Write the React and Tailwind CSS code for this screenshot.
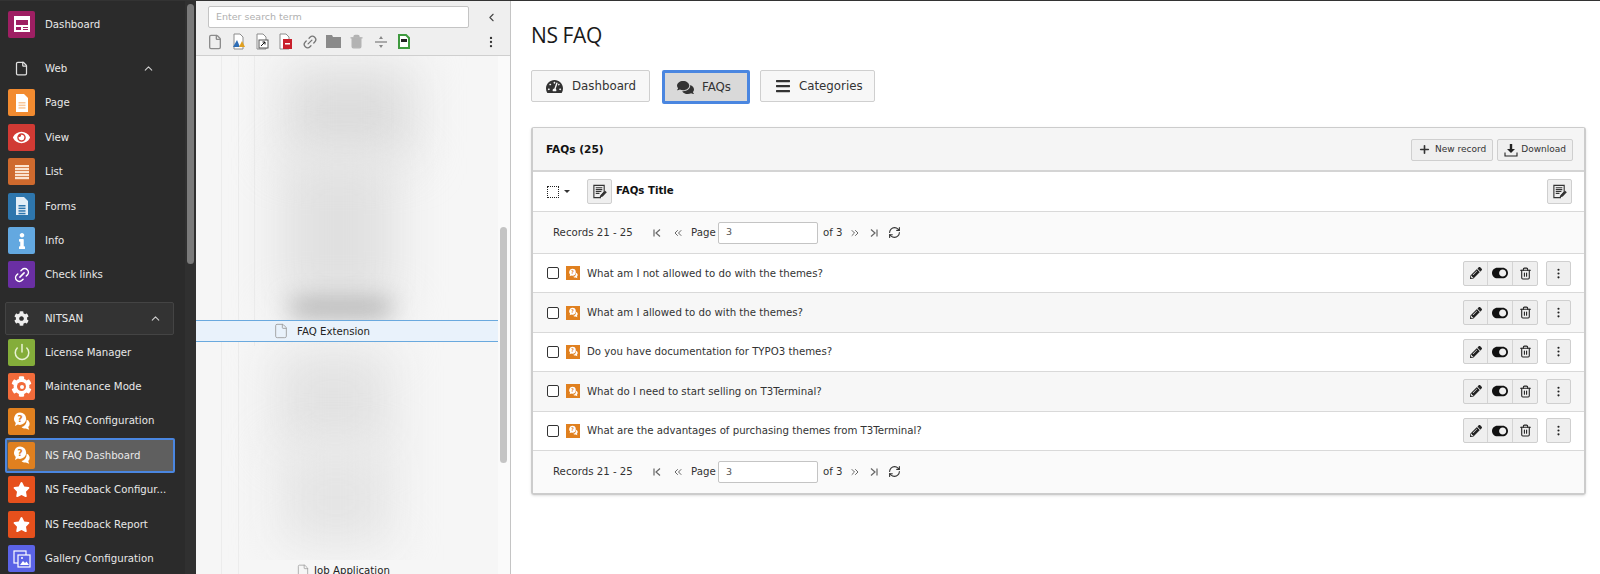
import React from 'react';
import { ChevronUp, ChevronLeft, EllipsisVertical, File, Trash2, Plus, RefreshCw, ChevronsLeft, ChevronsRight, Link2, Power } from 'lucide-react';
import { FaTachometerAlt, FaComments, FaBars, FaPencilAlt, FaToggleOn, FaCog, FaEye, FaStar, FaInfo } from 'react-icons/fa';

const FaqGlyph = ({ size = 20 }) => (
  <svg width={size} height={size} viewBox="0 0 20 20">
    <path d="M8 1.500a6.200 6.200 0 0 1 0 12.400c-.8 0-1.500-.1-2.200-.4L3 15l.8-3A6.200 6.200 0 0 1 8 1.500z" fill="#fff" />
    <path d="M14.600 8.500a4.600 4.600 0 0 1 1.600 7.600l1 2.600-3.400-1.300c-1.600.2-3.200-.3-4.300-1.500 3.200-.2 5.300-3.300 5.100-7.400z" fill="#fff" />
    <text x="8" y="11" fontSize="9" fontWeight="700" textAnchor="middle" fill="#e0801f" fontFamily="DejaVu Sans">?</text>
  </svg>
);

const DocGlyph = ({ lines = 3, color = '#fff', line = '#f9c79a' }) => (
  <svg width="18" height="20" viewBox="0 0 18 20">
    <path d="M3 1h8l4 4v14H3z" fill={color} />
    {Array.from({ length: lines }).map((_, i) => (
      <rect key={i} x="5.500" y={9 + i * 2.6} width="7" height="1.500" fill={line} />
    ))}
  </svg>
);

const DashGlyph = () => (
  <svg width="18" height="18" viewBox="0 0 18 18">
    <rect x="1" y="1" width="16" height="16" fill="#fff" />
    <rect x="3" y="5" width="12" height="5" fill="#9e1f63" />
    <rect x="3" y="12" width="5" height="3" fill="#9e1f63" />
    <rect x="10" y="12" width="5" height="1" fill="#9e1f63" />
    <rect x="10" y="14" width="5" height="1" fill="#9e1f63" />
  </svg>
);

const ListGlyph = () => (
  <svg width="16" height="16" viewBox="0 0 16 16">
    {[1, 4, 7, 10, 13].map((y) => <rect key={y} x="1" y={y} width="14" height="2.200" fill="#fbe3d0" />)}
  </svg>
);

const GalleryGlyph = () => (
  <svg width="18" height="18" viewBox="0 0 18 18" fill="none" stroke="#fff" strokeWidth="1.200">
    <rect x="1" y="1" width="12" height="12" />
    <rect x="5" y="5" width="12" height="12" fill="#5b63e6" />
    <path d="M7 15l3-4 2 2 1.500-1.500L16 15z" fill="#fff" stroke="none" />
    <circle cx="9" cy="8" r="1" fill="#fff" stroke="none" />
  </svg>
);

const MaintenanceGlyph = () => (
  <span className="relative flex items-center justify-center">
    <FaCog size={21} color="#fff" />
    <span className="absolute w-[9px] h-[9px] rounded-full bg-[#f26b3a] flex items-center justify-center">
      <span className="w-[4px] h-[4px] rounded-full bg-white" />
    </span>
  </span>
);

const DownloadIcon = () => (
  <svg width="14" height="14" viewBox="0 0 14 14" className="mr-[3px]">
    <path d="M5.800 1h2.400v5H11L7 10 3 6h2.800z" fill="#222" />
    <path d="M1 9.500v3.500h12V9.500" fill="none" stroke="#222" strokeWidth="1.100" />
  </svg>
);

const webModules = [
  { label: 'Page', bg: 'bg-[#f28b30]', icon: <DocGlyph /> },
  { label: 'View', bg: 'bg-[#d13a34]', icon: <FaEye size={17} color="#fff" /> },
  { label: 'List', bg: 'bg-[#cf6a2e]', icon: <ListGlyph /> },
  { label: 'Forms', bg: 'bg-[#2e76ad]', icon: <DocGlyph lines={4} color="#e3eef7" line="#2e76ad" /> },
  { label: 'Info', bg: 'bg-[#63a8e0]', icon: <FaInfo size={16} color="#fff" /> },
  { label: 'Check links', bg: 'bg-[#6a2fa3]', icon: <Link2 size={18} color="#fff" className="-rotate-45" /> },
];

const nitsanModules = [
  { label: 'License Manager', bg: 'bg-[#84ad3a]', icon: <Power size={18} color="#e8f2d4" /> },
  { label: 'Maintenance Mode', bg: 'bg-[#f26b3a]', icon: <MaintenanceGlyph /> },
  { label: 'NS FAQ Configuration', bg: 'bg-[#e0801f]', icon: <FaqGlyph /> },
  { label: 'NS FAQ Dashboard', bg: 'bg-[#e0801f]', icon: <FaqGlyph />, active: true },
  { label: 'NS Feedback Configur...', bg: 'bg-[#e6501c]', icon: <FaStar size={17} color="#fff" /> },
  { label: 'NS Feedback Report', bg: 'bg-[#e6501c]', icon: <FaStar size={17} color="#fff" /> },
  { label: 'Gallery Configuration', bg: 'bg-[#5b63e6]', icon: <GalleryGlyph /> },
];

const questions = [
  'What am I not allowed to do with the themes?',
  'What am I allowed to do with the themes?',
  'Do you have documentation for TYPO3 themes?',
  'What do I need to start selling on T3Terminal?',
  'What are the advantages of purchasing themes from T3Terminal?',
];

const ModuleRow = ({ label, bg, icon, active }) => (
  <div className="h-[34.4px] flex items-center relative">
    {active && <div className="absolute left-[5px] w-[170px] top-0 h-[35px] bg-[#5f5f5f] border-2 border-[#4a86e0] rounded-[2px]" />}
    <div className={`relative ml-[8px] w-[27px] h-[27px] rounded-[2px] flex items-center justify-center ${bg}`}>{icon}</div>
    <span className="relative ml-[10px] text-[10.2px] text-[#e8e8e8]">{label}</span>
  </div>
);

const EditIcon = () => (
  <svg width="15" height="15" viewBox="0 0 16 16">
    <path d="M2 1.500h11v7l-4 4.500v1.500H2z" fill="none" stroke="#333" strokeWidth="1.200" />
    <path d="M4 4h7M4 6h7M4 8h6M4 10h4" stroke="#333" strokeWidth="1.100" />
    <path d="M9 14l.7-2.600 4.300-4.300 1.800 1.800-4.300 4.300z" fill="#333" />
  </svg>
);

const SquareBtn = ({ children }) => (
  <div className="w-[25px] h-[25px] bg-[#efefef] border border-[#cfcfcf] rounded-[2px] flex items-center justify-center">{children}</div>
);

const FirstIcon = () => (
  <svg width="12" height="12" viewBox="0 0 12 12" fill="none" stroke="#666" strokeWidth="1.200">
    <path d="M3 2.500v7M9 2.500L5 6l4 3.500" />
  </svg>
);

const LastIcon = () => (
  <svg width="12" height="12" viewBox="0 0 12 12" fill="none" stroke="#666" strokeWidth="1.200">
    <path d="M9 2.500v7M3 2.500L7 6l-4 3.500" />
  </svg>
);

const Pager = () => (
  <div className="flex items-center pl-[20px] text-[10.2px] text-[#333]">
    <span className="w-[98px]">Records 21 - 25</span>
    <FirstIcon />
    <ChevronsLeft size={12} className="text-[#666] ml-[9px] mr-[7px]" />
    <span className="w-[24px]">Page</span>
    <div className="ml-[3px] w-[100px] h-[22px] bg-white border border-[#c4c4c4] rounded-[2px] flex items-center pl-[7px] text-[9.5px] text-[#555]">3</div>
    <span className="ml-[5px] w-[22px]">of 3</span>
    <ChevronsRight size={12} className="text-[#666] ml-[4px] mr-[7px]" />
    <LastIcon />
    <RefreshCw size={13} className="text-[#333] ml-[8px]" />
  </div>
);

const tools = [
  <File size={16} className="text-[#8c8c8c]" />,
  <svg width="16" height="17" viewBox="0 0 16 17"><path d="M3 1h6l3 3v12H3z" fill="#fff" stroke="#8c8c8c" /><path d="M2 14l4-7 3 7z" fill="#2f6db5" /><path d="M8 14l3-6 3 6z" fill="#e0a020" /></svg>,
  <svg width="16" height="17" viewBox="0 0 16 17"><path d="M3 1h6l3 3v12H3z" fill="#fff" stroke="#8c8c8c" /><rect x="5" y="7" width="9" height="8" fill="#fff" stroke="#555" /><path d="M7 13l4-4M8.500 9H11v2.500" stroke="#111" fill="none" /></svg>,
  <svg width="16" height="17" viewBox="0 0 16 17"><path d="M2 1h6l3 3v12H2z" fill="#fff" stroke="#8c8c8c" /><rect x="5" y="6" width="9" height="10" fill="#c8202c" /><rect x="7" y="10" width="5" height="1.500" fill="#fff" /></svg>,
  <Link2 size={16} className="text-[#777] -rotate-45" />,
  <svg width="15" height="13" viewBox="0 0 15 13"><path d="M0 0h6l1 2h8v11H0z" fill="#8a8a8a" /></svg>,
  <Trash2 size={15} className="text-[#b3b3b3]" fill="#b3b3b3" />,
  <svg width="14" height="14" viewBox="0 0 14 14"><rect x="1" y="6.500" width="12" height="1" fill="#666" /><path d="M7 1l2 3H5zM7 13l2-3H5z" fill="#888" /></svg>,
  <svg width="12" height="15" viewBox="0 0 12 15"><path d="M1 1h7l3 3v10H1z" fill="#fff" stroke="#3f9a3f" strokeWidth="2" /><rect x="3" y="5" width="6" height="3" fill="#222" /></svg>,
];

const App = () => (
  <div className="flex w-[1600px] h-[574px] overflow-hidden bg-white font-['DejaVu_Sans',sans-serif] border-t border-[#333]">
    {/* Module menu */}
    <div className="w-[196px] shrink-0 flex bg-[#2b2b2b]">
      <div className="w-[185px] pt-[6px]">
        <ModuleRow label="Dashboard" bg="bg-[#9e1f63]" icon={<DashGlyph />} />
        <div className="mt-[10px] h-[34.4px] flex items-center pr-[30px]">
          <div className="ml-[8px] w-[27px] flex justify-center"><File size={15} color="#e0e0e0" /></div>
          <span className="ml-[10px] text-[10.2px] text-[#e8e8e8] flex-1">Web</span>
          <ChevronUp size={13} color="#cfcfcf" />
        </div>
        {webModules.map((m) => <ModuleRow key={m.label} {...m} />)}
        <div className="mt-[10px] ml-[5px] w-[169px] h-[33px] flex items-center bg-[#333] border border-[#444] rounded-[2px] pr-[11px]">
          <div className="ml-[2px] w-[27px] flex justify-center"><FaCog size={15} color="#eee" /></div>
          <span className="ml-[10px] text-[10.2px] text-[#e8e8e8] flex-1">NITSAN</span>
          <ChevronUp size={13} color="#cfcfcf" />
        </div>
        {nitsanModules.map((m) => <ModuleRow key={m.label} {...m} />)}
      </div>
      <div className="flex-1 bg-[#303030] pt-[3px] pl-[2px]">
        <div className="w-[7px] h-[260px] bg-[#7a7a7a] rounded-full" />
      </div>
    </div>

    {/* Page tree */}
    <div className="w-[315px] shrink-0 flex flex-col bg-[#f6f6f6] border-r border-[#c4c4c4]">
      <div className="h-[55px] shrink-0 bg-[#efefef] border-b border-[#cfcfcf]">
        <div className="flex items-center pt-[5px] pl-[12px]">
          <div className="w-[261px] h-[22px] bg-white border border-[#c4c4c4] rounded-[2px] flex items-center pl-[7px] text-[9.5px] text-[#b0b0b0]">Enter search term</div>
          <ChevronLeft size={13} className="ml-[16px] text-[#444]" />
        </div>
        <div className="flex items-center pl-[7px] pt-[5px]">
          {tools.map((t, i) => <div key={i} className="w-[23.7px] flex justify-center">{t}</div>)}
          <EllipsisVertical size={14} className="ml-[68px] text-[#333]" />
        </div>
      </div>
      <div className="flex-1 flex min-h-0">
        <div className="w-[302px] flex flex-col relative">
          <div className="absolute top-0 left-[25px] w-px h-full bg-[#ececec]" />
          <div className="absolute top-0 left-[42px] w-px h-full bg-[#ececec]" />
          <div className="absolute top-0 left-[58px] w-px h-[290px] bg-[#ececec]" />
          <div className="h-[264px] shrink-0 overflow-hidden relative">
            <div className="mt-[12px] ml-[88px] w-[130px] h-[90px] bg-[#dcdcdc] blur-xl" />
            <div className="ml-[85px] w-[115px] h-[150px] bg-[#e0e0e0] blur-xl" />
            <div className="absolute left-[95px] top-[246px] w-[100px] h-[12px] bg-[#909090] blur-md" />
          </div>
          <div className="h-[22px] shrink-0 flex items-center bg-[#e9f2fb] border-y border-[#6aa9de] relative">
            <File size={16} className="ml-[77px] text-[#9a9a9a]" strokeWidth={1.3} />
            <span className="ml-[8px] pt-[1px] text-[10.2px] text-[#222]">FAQ Extension</span>
          </div>
          <div className="h-[218px] shrink-0 overflow-hidden">
            <div className="mt-[8px] ml-[80px] w-[115px] h-[100px] bg-[#e2e2e2] blur-xl" />
            <div className="ml-[85px] w-[110px] h-[95px] bg-[#e4e4e4] blur-xl" />
          </div>
          <div className="flex items-center h-[22px] shrink-0">
            <File size={14} className="ml-[100px] text-[#9a9a9a]" strokeWidth={1.3} />
            <span className="ml-[4px] text-[10.2px] text-[#222]">Job Application</span>
          </div>
        </div>
        <div className="flex-1 bg-[#fafafa] pl-[2px] pt-[171px]">
          <div className="w-[7px] h-[236px] bg-[#c4c4c4] rounded-full" />
        </div>
      </div>
    </div>

    {/* Module content */}
    <div className="flex-1 min-w-0 pl-[20px] pr-[14px]">
      <h1 className="mt-[19px] text-[21px] leading-[30px] tracking-[-0.4px] text-[#1a1a1a] font-['Open_Sans',sans-serif]">NS FAQ</h1>
      <div className="mt-[20px] flex items-start text-[11.8px] text-[#333]">
        <div className="w-[119px] h-[32px] bg-[#f7f7f7] border border-[#cfcfcf] rounded-[2px] flex items-center pl-[14px]">
          <FaTachometerAlt size={17} className="text-[#333]" /><span className="ml-[9px] mt-[2px]">Dashboard</span>
        </div>
        <div className="ml-[12px] w-[88px] h-[34px] bg-[#d9d9d9] border-[3px] border-[#4a86e0] rounded-[2px] flex items-center pl-[12px]">
          <FaComments size={17} className="text-[#333]" /><span className="ml-[8px] mt-[2px]">FAQs</span>
        </div>
        <div className="ml-[10px] w-[115px] h-[32px] bg-[#f7f7f7] border border-[#cfcfcf] rounded-[2px] flex items-center pl-[14px]">
          <FaBars size={16} className="text-[#333]" /><span className="ml-[8px] mt-[2px]">Categories</span>
        </div>
      </div>

      <div className="mt-[23px] border-2 border-t border-[#cccccc] rounded-[3px] shadow-sm">
        <div className="h-[44px] bg-[#f5f5f5] border-b-2 border-[#d4d4d4] flex items-center pl-[13px] pr-[11px] pt-[1px]">
          <span className="text-[10.6px] font-bold text-[#111] flex-1">FAQs (25)</span>
          <div className="h-[22px] px-[6px] bg-[#efefef] border border-[#cfcfcf] rounded-[2px] flex items-center text-[9px] text-[#333]">
            <Plus size={13} strokeWidth={3} className="mr-[4px]" />New record
          </div>
          <div className="ml-[4px] h-[22px] px-[6px] bg-[#efefef] border border-[#cfcfcf] rounded-[2px] flex items-center text-[9px] text-[#333]">
            <DownloadIcon />Download
          </div>
        </div>
        <div className="h-[40px] bg-white border-b border-[#d9d9d9] flex items-center pl-[14px] pr-[12px]">
          <div className="w-[12px] h-[12px] border border-dotted border-[#222]" />
          <div className="ml-[5px] w-0 h-0 border-x-[3px] border-x-transparent border-t-[3px] border-t-[#333]" />
          <div className="ml-[17px]"><SquareBtn><EditIcon /></SquareBtn></div>
          <span className="ml-[4px] mb-[2px] text-[10.2px] font-bold text-[#111] flex-1">FAQs Title</span>
          <SquareBtn><EditIcon /></SquareBtn>
        </div>
        <div className="h-[42px] bg-[#fafafa] border-b border-[#d9d9d9] flex items-center"><Pager /></div>
        {questions.map((q, i) => (
          <div key={q} className={`h-[39.4px] border-b border-[#d9d9d9] flex items-center pl-[14px] pr-[13px] ${i % 2 ? 'bg-[#f7f7f7]' : 'bg-white'}`}>
            <div className="w-[12px] h-[12px] border border-[#333] rounded-[2px] bg-white" />
            <div className="ml-[7px] w-[14px] h-[14px] bg-[#e0801f] flex items-center justify-center"><FaqGlyph size={11} /></div>
            <span className="ml-[7px] text-[10.2px] text-[#333] flex-1">{q}</span>
            <div className="flex h-[25px] bg-[#efefef] border border-[#cfcfcf] rounded-[2px] divide-x divide-[#d4d4d4]">
              <div className="w-[24px] flex items-center justify-center"><FaPencilAlt size={12} color="#222" /></div>
              <div className="w-[25px] flex items-center justify-center"><FaToggleOn size={16} color="#111" /></div>
              <div className="w-[24px] flex items-center justify-center"><Trash2 size={13} color="#222" /></div>
            </div>
            <div className="ml-[8px]"><SquareBtn><EllipsisVertical size={13} color="#222" /></SquareBtn></div>
          </div>
        ))}
        <div className="h-[42px] bg-[#fafafa] flex items-center"><Pager /></div>
      </div>
    </div>
  </div>
);

export default App;
